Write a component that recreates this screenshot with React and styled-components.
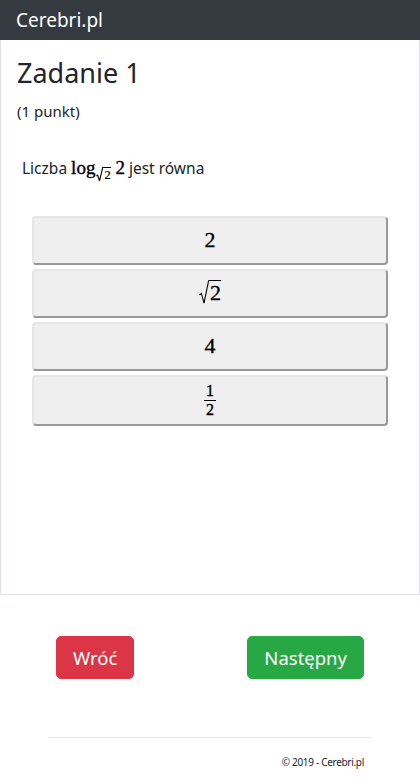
import React from 'react'
import styled, { createGlobalStyle } from 'styled-components'

const GlobalStyle = createGlobalStyle`
  body {
    margin: 0;
    background: #fff;
    font-family: "Noto Sans", "Open Sans", sans-serif;
    color: #212529;
  }
`

const options = [
  { key: 'a', type: 'num', value: '2' },
  { key: 'b', type: 'sqrt', value: '2' },
  { key: 'c', type: 'num', value: '4' },
  { key: 'd', type: 'frac', value: ['1', '2'] },
]

function Sqrt({ children, small }) {
  return (
    <SqrtWrap>
      <Radical viewBox="0 0 10 20" preserveAspectRatio="none" $small={small}>
        <polyline
          points="0.5,12.5 2.4,11.2 5,19.2 9.6,0.6 10,0.6"
          fill="none"
          stroke="#000"
          strokeWidth="1.1"
          vectorEffect="non-scaling-stroke"
        />
      </Radical>
      <Radicand>{children}</Radicand>
    </SqrtWrap>
  )
}

function Fraction({ num, den }) {
  return (
    <Frac>
      <FracPart>{num}</FracPart>
      <FracBar />
      <FracPart>{den}</FracPart>
    </Frac>
  )
}

function Answer({ option }) {
  if (option.type === 'frac') return <Fraction num={option.value[0]} den={option.value[1]} />
  if (option.type === 'sqrt') return <MathText><Sqrt>{option.value}</Sqrt></MathText>
  return <MathText>{option.value}</MathText>
}

function App() {
  return (
    <>
      <GlobalStyle />
      <Navbar>
        <Brand href="#home">Cerebri.pl</Brand>
      </Navbar>
      <Card>
        <Title>Zadanie 1</Title>
        <Points>(1 punkt)</Points>
        <Question>
          Liczba{' '}
          <InlineMath>
            log<Sub><Sqrt small>2</Sqrt></Sub> 2
          </InlineMath>{' '}
          jest równa
        </Question>
        <Options>
          {options.map(o => (
            <Option key={o.key}><Answer option={o} /></Option>
          ))}
        </Options>
      </Card>
      <Bottom>
        <NavRow>
          <ActionButton $variant="danger">Wróć</ActionButton>
          <ActionButton $variant="success">Następny</ActionButton>
        </NavRow>
        <Divider />
        <Footer>© 2019 - Cerebri.pl</Footer>
      </Bottom>
    </>
  )
}

export default App

const Navbar = styled.nav`
  height: 40px;
  background: #343a40;
  display: flex;
  align-items: center;
  padding: 0 16px;
  box-sizing: border-box;
`
const Brand = styled.a`
  color: #fff;
  font-size: 19px;
  line-height: 30px;
  text-decoration: none;
`
const Card = styled.div`
  min-height: 555px;
  box-sizing: border-box;
  border: 1px solid #dee2e6;
  border-top: none;
  padding: 17px 16px 14px;
`
const Title = styled.h3`
  margin: 0 0 10px;
  font-size: 27px;
  font-weight: 400;
  line-height: 1.2;
`
const Points = styled.div`
  font-size: 15px;
  line-height: 24px;
`
const Question = styled.p`
  margin: 33px 0 0 5px;
  font-size: 15.5px;
  line-height: 24px;
`
const InlineMath = styled.span`
  font-family: "Liberation Serif", "Times New Roman", serif;
  font-size: 19px;
  color: #000;
  -webkit-text-stroke: 0.35px #000;
`
const Sub = styled.span`
  display: inline-block;
  font-size: 12.5px;
  vertical-align: -7px;
  line-height: 1;
  margin-left: 1px;
  -webkit-text-stroke: 0.2px #000;
`
const SqrtWrap = styled.span`
  display: inline-flex;
  align-items: stretch;
  line-height: 1;
`
const Radical = styled.svg`
  width: ${p => (p.$small ? '7px' : '10px')};
  height: auto;
  margin-top: 1px;
  flex-shrink: 0;
`
const Radicand = styled.span`
  border-top: 1px solid #000;
  margin-top: 1px;
  padding: 1px 0 0 1px;
`
const Options = styled.div`
  margin: 32px 15px 0;
  display: flex;
  flex-direction: column;
  gap: 4px;
`
const Option = styled.button`
  display: flex;
  align-items: center;
  justify-content: center;
  min-height: 49px;
  box-sizing: border-box;
  padding: 6px;
  background: #efefef;
  border: 2px solid;
  border-color: #e6e6e6 #999 #999 #e6e6e6;
  border-radius: 4px;
  cursor: pointer;
`
const MathText = styled.span`
  font-family: "Liberation Serif", "Times New Roman", serif;
  font-size: 22px;
  color: #000;
  line-height: 1;
  -webkit-text-stroke: 0.35px #000;
`
const Frac = styled.span`
  display: inline-flex;
  flex-direction: column;
  align-items: center;
  font-family: "Liberation Serif", "Times New Roman", serif;
  font-size: 16px;
  color: #000;
  -webkit-text-stroke: 0.35px #000;
`
const FracPart = styled.span`
  line-height: 16px;
  padding: 0 1px;
`
const FracBar = styled.span`
  align-self: stretch;
  height: 1px;
  background: #000;
  margin: 1px 0;
  min-width: 12px;
`
const Bottom = styled.div`
  margin: 0 48px;
`
const NavRow = styled.div`
  display: flex;
  justify-content: space-between;
  padding: 41px 8px 0;
`
const ActionButton = styled.button`
  font-family: "Noto Sans", "Open Sans", sans-serif;
  font-size: 18.5px;
  line-height: 30px;
  padding: 5.5px 16px;
  border: 1px solid transparent;
  border-radius: 5px;
  color: #fff;
  cursor: pointer;
  background: ${p => (p.$variant === 'danger' ? '#dc3545' : '#28a745')};
  border-color: ${p => (p.$variant === 'danger' ? '#dc3545' : '#28a745')};
`
const Divider = styled.hr`
  margin: 58px 0 0;
  border: 0;
  border-top: 1px solid #e5e5e5;
`
const Footer = styled.div`
  text-align: right;
  padding: 0 8px;
  margin-top: 17px;
  font-size: 10px;
  line-height: 15px;
  letter-spacing: -0.3px;
`
